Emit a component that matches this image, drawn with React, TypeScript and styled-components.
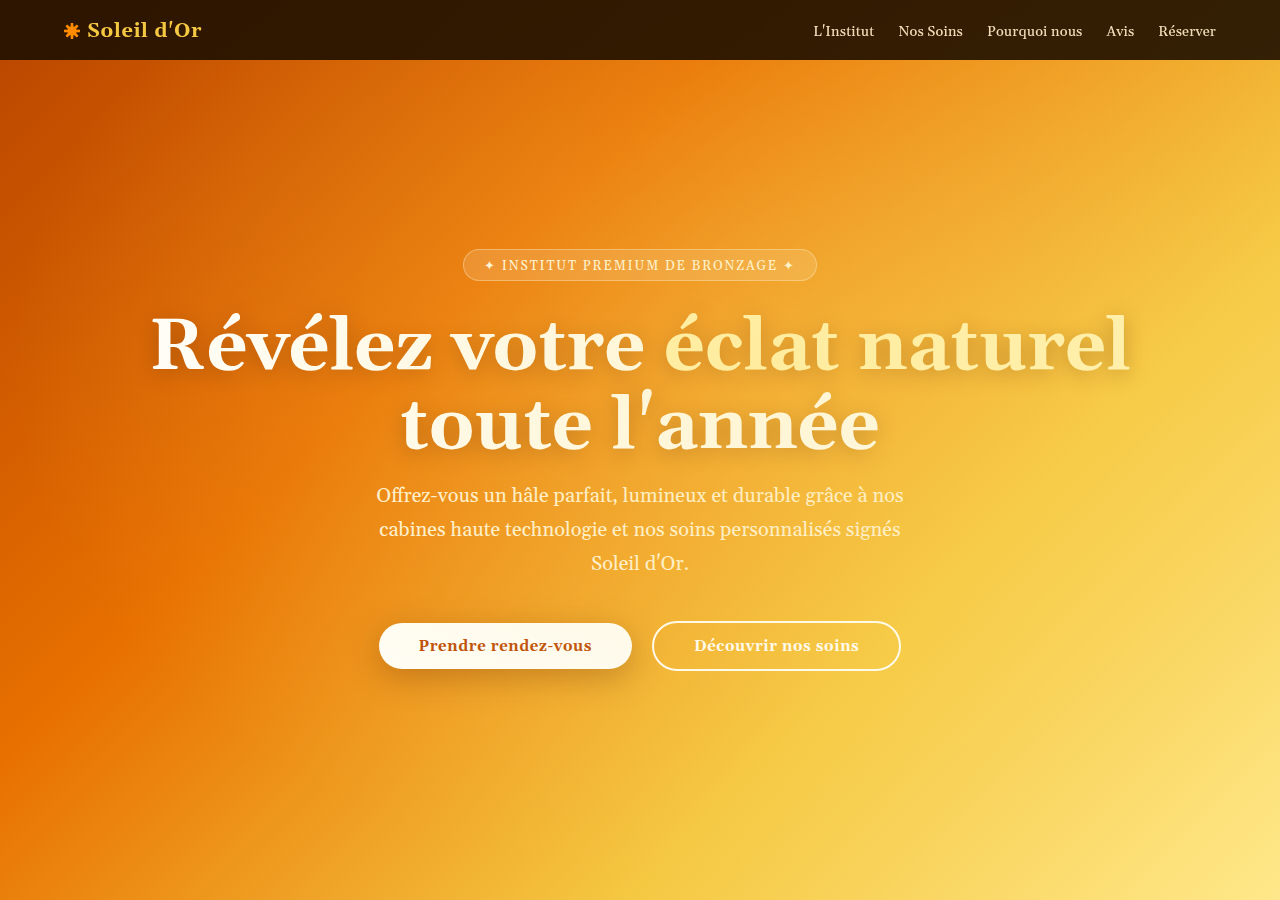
import React from "react";
import styled, { createGlobalStyle, css } from "styled-components";

const GlobalStyle = createGlobalStyle`
  *, *::before, *::after { box-sizing: border-box; }
  body {
    margin: 0;
    font-family: Georgia, Gelasio, "Liberation Serif", serif;
    color: #fff;
  }
`;

const Header = styled.header`
  position: fixed;
  top: 0;
  left: 0;
  right: 0;
  z-index: 10;
  height: 60px;
  padding: 2px 5% 0;
  display: flex;
  align-items: center;
  justify-content: space-between;
  background: rgba(30, 16, 0, 0.9);
`;

const Brand = styled.a`
  display: flex;
  align-items: center;
  gap: 7px;
  font-size: 20px;
  font-weight: 700;
  letter-spacing: 0.03em;
  color: #f5c842;
  text-decoration: none;
`;

const NavList = styled.ul`
  display: flex;
  gap: 24px;
  margin: 0;
  padding: 0;
  list-style: none;
`;

const NavLink = styled.a`
  font-size: 14px;
  font-weight: 500;
  letter-spacing: 0.01em;
  color: #f0dcb8;
  text-decoration: none;
`;

const Hero = styled.section`
  position: relative;
  min-height: 100vh;
  padding: 80px 5% 60px;
  display: flex;
  flex-direction: column;
  align-items: center;
  justify-content: center;
  text-align: center;
  background: linear-gradient(135deg, #b84500 0%, #e87000 35%, #f5c842 70%, #ffe88a 100%);

  &::before {
    content: "";
    position: absolute;
    inset: 0;
    pointer-events: none;
    background: radial-gradient(ellipse at 60% 40%, rgba(255, 220, 100, 0.3) 0%, transparent 70%);
  }
`;

const Badge = styled.p`
  margin: 0 0 28px;
  padding: 8px 20px 6px;
  border: 1px solid rgba(255, 255, 255, 0.35);
  border-radius: 32px;
  background: rgba(255, 255, 255, 0.15);
  font-size: 13px;
  line-height: 16px;
  letter-spacing: 0.14em;
  text-transform: uppercase;
  color: #fffaeb;
`;

const Title = styled.h1`
  margin: 0 0 12px;
  max-width: 1000px;
  font-size: 72px;
  font-weight: 700;
  line-height: 79px;
  text-shadow: 0 4px 20px rgba(100, 40, 0, 0.4);
`;

const Glow = styled.span`
  color: #fff3b8;
`;

const Lead = styled.p`
  margin: 0 0 40px;
  max-width: 560px;
  font-size: 20px;
  line-height: 34px;
  color: #fff3dc;
`;

const Actions = styled.div`
  display: flex;
  flex-wrap: wrap;
  align-items: center;
  justify-content: center;
  gap: 20px;
`;

const Button = styled.button<{ $outlined?: boolean }>`
  padding: 15px 40px 13px;
  border: 0;
  border-radius: 50px;
  font-family: inherit;
  font-size: 15px;
  font-weight: 700;
  line-height: 18px;
  letter-spacing: 0.04em;
  cursor: pointer;
  ${({ $outlined }) =>
    $outlined
      ? css`
          border: 2px solid #fff;
          background: transparent;
          color: #fff;
        `
      : css`
          background: #fff;
          color: #b84500;
          box-shadow: 0 8px 32px rgba(100, 40, 0, 0.35);
        `}
`;

const rays = [0, 45, 90, 135, 180, 225, 270, 315];

function SunIcon() {
  return (
    <svg width="16" height="16" viewBox="-8 -8 16 16" fill="#ff8c00" aria-hidden="true">
      <circle r="4.4" />
      {rays.map((angle) => (
        <path key={angle} d="M-1.6 -3 L-1.2 -8 H1.2 L1.6 -3 Z" transform={`rotate(${angle})`} />
      ))}
    </svg>
  );
}

const links = [
  { label: "L'Institut", href: "#institut" },
  { label: "Nos Soins", href: "#soins" },
  { label: "Pourquoi nous", href: "#pourquoi" },
  { label: "Avis", href: "#avis" },
  { label: "Réserver", href: "#reserver" },
];

export default function App() {
  return (
    <>
      <GlobalStyle />
      <Header>
        <Brand href="#accueil">
          <SunIcon />
          Soleil d'Or
        </Brand>
        <nav>
          <NavList>
            {links.map((link) => (
              <li key={link.href}>
                <NavLink href={link.href}>{link.label}</NavLink>
              </li>
            ))}
          </NavList>
        </nav>
      </Header>
      <Hero id="accueil">
        <Badge>✦ Institut premium de bronzage ✦</Badge>
        <Title>
          Révélez votre <Glow>éclat naturel</Glow> toute l'année
        </Title>
        <Lead>
          Offrez-vous un hâle parfait, lumineux et durable grâce à nos cabines haute technologie et
          nos soins personnalisés signés Soleil d'Or.
        </Lead>
        <Actions>
          <Button type="button">Prendre rendez-vous</Button>
          <Button type="button" $outlined>
            Découvrir nos soins
          </Button>
        </Actions>
      </Hero>
    </>
  );
}
